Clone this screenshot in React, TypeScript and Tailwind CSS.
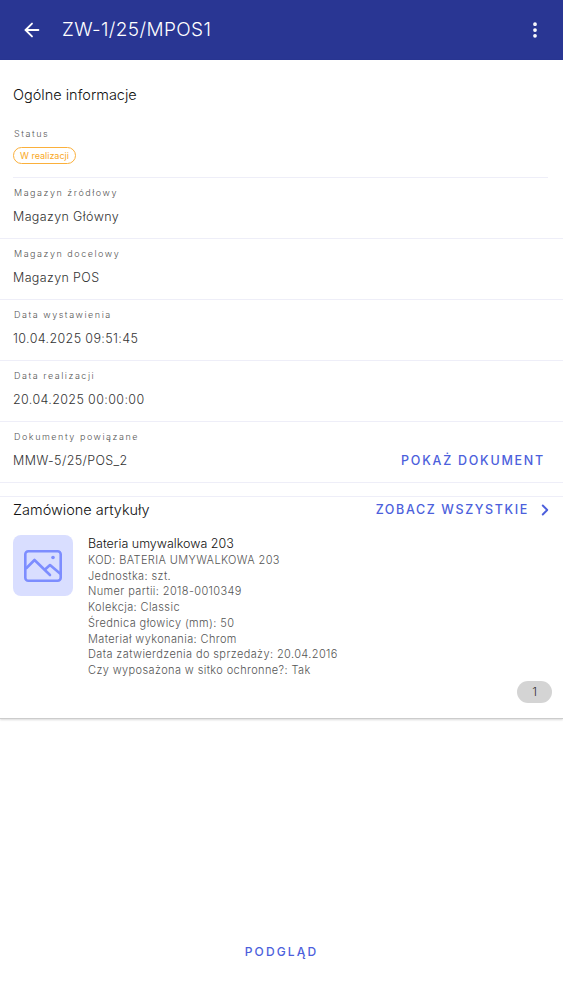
import React from 'react';
import { ArrowLeft, ChevronRight, EllipsisVertical } from 'lucide-react';

const font = 'font-["Inter","Roboto",sans-serif]';

const Field: React.FC<{ label: string; value: string; action?: string; h: string }> = ({ label, value, action, h }) => (
  <div className={`${h} border-b border-[#eeeef8] pl-[14px] pr-[18px]`}>
    <div className="pt-[8px] text-[9px] leading-[14px] font-light tracking-[0.17em] text-[#555]">{label}</div>
    <div className="mt-[8px] flex items-center justify-between">
      <span className="-ml-[1px] text-[12.5px] leading-[18px] font-light tracking-[0.03em] text-[#333]">{value}</span>
      {action && <span className="text-[12.5px] leading-[18px] font-medium tracking-[0.14em] text-[#4c5fdc]">{action}</span>}
    </div>
  </div>
);

const attrs = [
  'KOD: BATERIA UMYWALKOWA 203',
  'Jednostka: szt.',
  'Numer partii: 2018-0010349',
  'Kolekcja: Classic',
  'Średnica głowicy (mm): 50',
  'Materiał wykonania: Chrom',
  'Data zatwierdzenia do sprzedaży: 20.04.2016',
  'Czy wyposażona w sitko ochronne?: Tak',
];

export default function App() {
  return (
    <div className={`${font} flex h-[983px] w-[563px] flex-col overflow-hidden bg-white`}>
      {/* App bar */}
      <header className="flex h-[60px] shrink-0 items-center bg-[#293693] pl-[21px] pr-[18px] text-white">
        <ArrowLeft size={22} strokeWidth={2} />
        <h1 className="ml-[19px] text-[19px] font-light tracking-[0.02em]">ZW-1/25/MPOS1</h1>
        <EllipsisVertical size={20} strokeWidth={2.5} className="ml-auto" />
      </header>

      <div className="shrink-0 border-b border-[#ccc] shadow-[0_1px_2px_rgba(0,0,0,0.15)]">
        <h2 className="pl-[13px] pt-[25px] text-[14.5px] leading-[20px] font-light text-[#111]">Ogólne informacje</h2>

        {/* Status */}
        <div className="ml-[13px] mr-[15px] mt-[22px] h-[51px] border-b border-[#eeeef8]">
          <div className="pl-[1px] text-[9px] leading-[14px] font-light tracking-[0.17em] text-[#555]">Status</div>
          <span className="mt-[6px] inline-flex h-[17px] items-center rounded-full border border-[#fbb03b] px-[6px] text-[9px] text-[#f9a825]">W realizacji</span>
        </div>

        <Field label="Magazyn źródłowy" value="Magazyn Główny" h="h-[61px]" />
        <Field label="Magazyn docelowy" value="Magazyn POS" h="h-[61px]" />
        <Field label="Data wystawienia" value="10.04.2025 09:51:45" h="h-[61px]" />
        <Field label="Data realizacji" value="20.04.2025 00:00:00" h="h-[61px]" />
        <Field label="Dokumenty powiązane" value="MMW-5/25/POS_2" action="POKAŻ DOKUMENT" h="h-[61px]" />

        {/* Ordered items */}
        <div className="mt-[13px] flex h-[27px] items-center justify-between border-t border-[#eeeef8] pl-[13px] pr-[9px]">
          <span className="text-[14.5px] font-light text-[#111]">Zamówione artykuły</span>
          <span className="flex items-center gap-[7px] text-[12.5px] font-medium tracking-[0.13em] text-[#4c5fdc]">
            ZOBACZ WSZYSTKIE
            <ChevronRight size={18} strokeWidth={2.5} />
          </span>
        </div>

        <div className="relative flex h-[195px] pl-[13px] pt-[12px]">
          <div className="flex h-[61px] w-[60px] shrink-0 items-center justify-center rounded-[8px] bg-[#d9deff]">
            <svg width="38" height="32" viewBox="0 0 38 32" fill="none" stroke="#7d8dff" strokeWidth="2.6" strokeLinecap="round" strokeLinejoin="round">
              <rect x="1.3" y="1.3" width="35.4" height="29.4" rx="3" />
              <path d="M2.5 18L10.5 10L26 25" />
              <path d="M21 19.5L26 15L36 23.5" />
              <circle cx="29" cy="7.5" r="1.8" fill="#7d8dff" stroke="none" />
            </svg>
          </div>
          <div className="ml-[15px]">
            <div className="text-[12.5px] leading-[18px] font-light text-[#111]">Bateria umywalkowa 203</div>
            {attrs.map(a => (
              <div key={a} className="text-[11px] leading-[15.7px] font-light tracking-[0.035em] text-[#555]">{a}</div>
            ))}
          </div>
          <span className="absolute bottom-[15px] right-[11px] flex h-[22px] w-[35px] items-center justify-center rounded-full bg-[#d4d4d4] text-[12px] font-light text-[#333]">1</span>
        </div>
      </div>

      {/* Footer */}
      <div className="mt-auto flex h-[62px] items-start justify-center pt-[22px]">
        <span className="text-[12px] font-medium tracking-[0.18em] text-[#4c5fdc]">PODGLĄD</span>
      </div>
    </div>
  );
}
